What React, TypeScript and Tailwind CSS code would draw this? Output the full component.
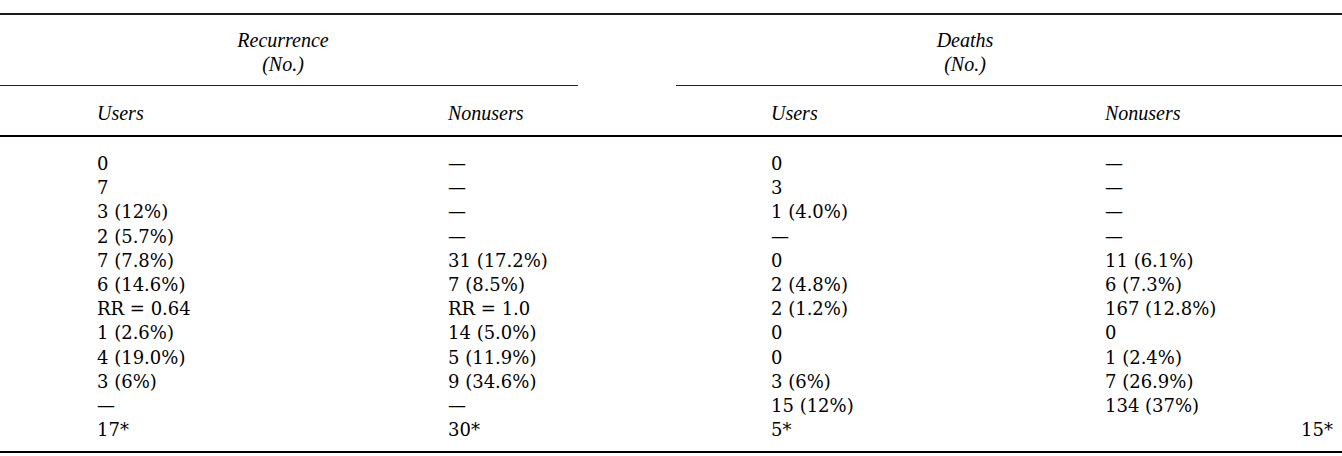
import React from 'react';

type Row = [string, string, string, string];

const rows: Row[] = [
  ['0', '—', '0', '—'],
  ['7', '—', '3', '—'],
  ['3 (12%)', '—', '1 (4.0%)', '—'],
  ['2 (5.7%)', '—', '—', '—'],
  ['7 (7.8%)', '31 (17.2%)', '0', '11 (6.1%)'],
  ['6 (14.6%)', '7 (8.5%)', '2 (4.8%)', '6 (7.3%)'],
  ['RR = 0.64', 'RR = 1.0', '2 (1.2%)', '167 (12.8%)'],
  ['1 (2.6%)', '14 (5.0%)', '0', '0'],
  ['4 (19.0%)', '5 (11.9%)', '0', '1 (2.4%)'],
  ['3 (6%)', '9 (34.6%)', '3 (6%)', '7 (26.9%)'],
  ['—', '—', '15 (12%)', '134 (37%)'],
];

const serif = "font-['DejaVu_Serif',serif]";
const headFont = "font-['Liberation_Serif',serif] italic text-[20px]";

const App: React.FC = () => {
  return (
    <div className="w-[1342px] h-[456px] bg-white text-black pt-[13px]">
      <table className="w-[1342px] table-fixed border-collapse">
        <colgroup>
          <col className="w-[350px]" />
          <col className="w-[228px]" />
          <col className="w-[98px]" />
          <col className="w-[332px]" />
          <col className="w-[334px]" />
        </colgroup>
        <thead>
          <tr className="border-t-2 border-[#1a1a1a]">
            <th colSpan={2} className={`${headFont} font-normal leading-[24px] text-center pr-[12px] pt-[13px] pb-[9px] border-b border-[#222]`}>
              Recurrence
              <br />
              (No.)
            </th>
            <th />
            <th colSpan={2} className={`${headFont} font-normal leading-[24px] text-center pr-[88px] pt-[13px] pb-[9px] border-b border-[#222]`}>
              Deaths
              <br />
              (No.)
            </th>
          </tr>
          <tr className={`${headFont} leading-[24px] border-b-2 border-black`}>
            <th className="font-normal text-left pl-[97px] pt-[15px] pb-[10px]">Users</th>
            <th className="font-normal text-left pl-[98px] pt-[15px] pb-[10px]">Nonusers</th>
            <th />
            <th className="font-normal text-left pl-[95px] pt-[15px] pb-[10px]">Users</th>
            <th className="font-normal text-left pl-[97px] pt-[15px] pb-[10px]">Nonusers</th>
          </tr>
        </thead>
        <tbody className={`${serif} text-[18px] leading-[24.2px]`}>
          <tr>
            <td colSpan={5} className="h-[16px] p-0" />
          </tr>
          {rows.map((r, i) => (
            <tr key={i}>
              <td className="pl-[97px] p-0 whitespace-nowrap">{r[0]}</td>
              <td className="pl-[98px] p-0 whitespace-nowrap">{r[1]}</td>
              <td />
              <td className="pl-[95px] p-0 whitespace-nowrap">{r[2]}</td>
              <td className="pl-[97px] p-0 whitespace-nowrap">{r[3]}</td>
            </tr>
          ))}
          <tr className="border-b-2 border-black">
            <td className="pl-[97px] pb-[9px] whitespace-nowrap">17*</td>
            <td className="pl-[98px] pb-[9px] whitespace-nowrap">30*</td>
            <td />
            <td className="pl-[95px] pb-[9px] whitespace-nowrap">5*</td>
            <td className="text-right pr-[9px] pb-[9px] whitespace-nowrap">15*</td>
          </tr>
        </tbody>
      </table>
    </div>
  );
};

export default App;
